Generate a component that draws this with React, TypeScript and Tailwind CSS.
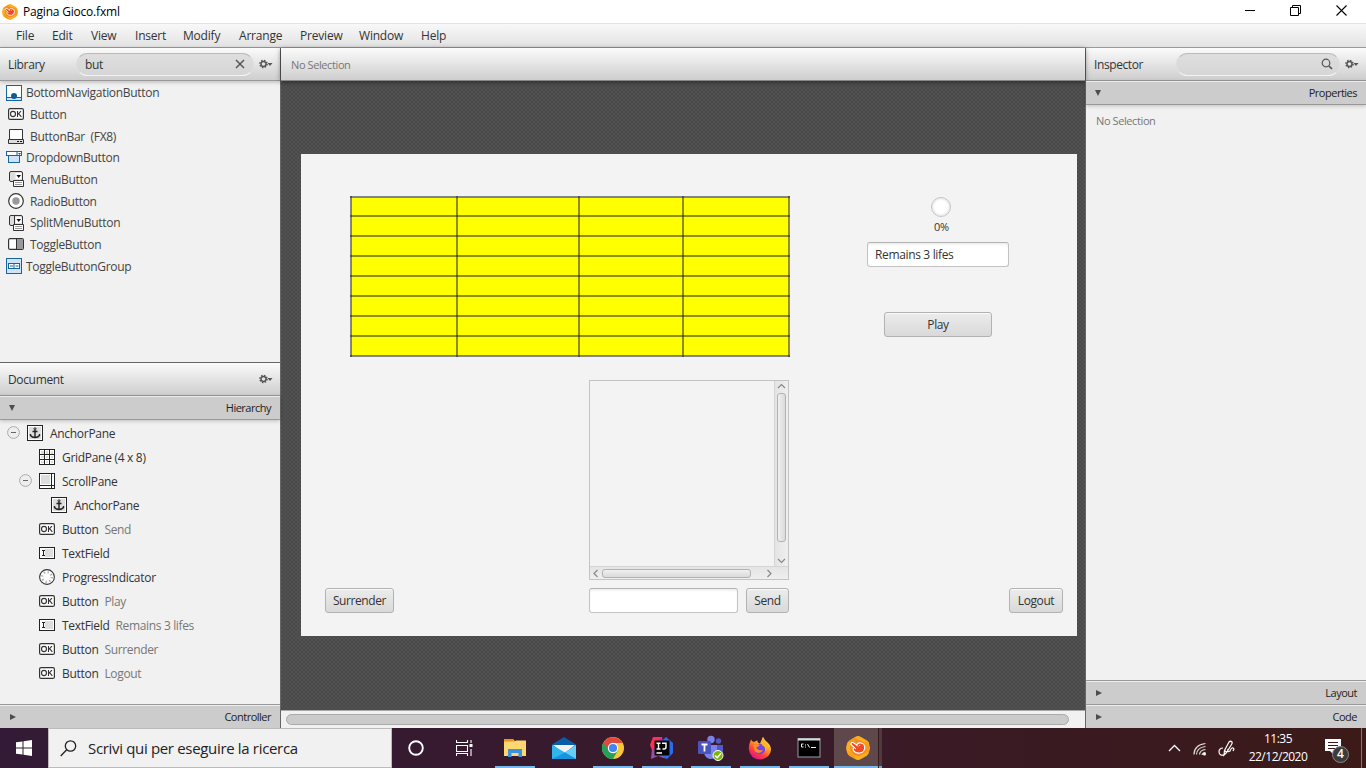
import React from "react";

const SEG = "font-['Open_Sans','Noto_Sans',sans-serif]";

function SceneLogo({ size }: { size: number }) {
  return (
    <svg width={size} height={size} viewBox="0 0 24 24" className="shrink-0">
      <path d="M9 1 Q12-1 15 1 L21 4.500 Q23.500 6 23.300 9 Q24.500 12 23.300 15 Q23 18.500 20.500 20 L15 23 Q12 25 9 23 L3.500 20 Q1 18 .7 15 Q-.5 12 .7 9 Q.8 6 3.300 4.500Z" fill="#fbb01f" />
      <path d="M3 5 L10 1 L12 6 L5 10Z M19 4 L23 9 L23 16 L18 18Z M2 15 L5 17 L10 23 L5 21Z" fill="#f58a12" opacity=".6" />
      <circle cx="12" cy="12" r="8" fill="#f68b2a" />
      <path d="M5 7.500 Q5.500 5.800 7.500 6.800 L10.500 9 Q12 6.500 15 7 Q19 8 18.800 12 Q18 16.500 14 17 Q9.500 17.500 7.500 14.500 Q6.500 12.800 8.500 11.800 L5.800 9.300 Q4.800 8.500 5 7.500Z" fill="#ee4a24" stroke="#fff" strokeWidth="1.200" />
      <path d="M10.500 9 L12 10.500 M13.200 8.800 L14.200 10 M8.500 11.800 L10 13" stroke="#fff" strokeWidth=".9" fill="none" />
    </svg>
  );
}

function Gear() {
  return (
    <svg width="14" height="10" viewBox="0 0 14 10" className="shrink-0">
      <circle cx="4.500" cy="5" r="3.500" fill="none" stroke="#555" strokeWidth="1.600" strokeDasharray="1.400 1.350" />
      <circle cx="4.500" cy="5" r="2.500" fill="none" stroke="#555" strokeWidth="1.400" />
      <path d="M8.500 4 H13.500 L11 7Z" fill="#555" />
    </svg>
  );
}

function OkIcon() {
  return (
    <svg width="16" height="16" viewBox="0 0 16 16">
      <rect x=".6" y="2.600" width="14.800" height="10.800" rx="1.500" fill="#fff" stroke="#333" strokeWidth="1.200" />
      <ellipse cx="5" cy="8" rx="2.500" ry="2.600" fill="none" stroke="#333" strokeWidth="1.100" />
      <path d="M9.500 5 V11 M13 5.200 L9.800 8.300 M10.600 7.600 L13.400 10.900" fill="none" stroke="#333" strokeWidth="1.100" />
    </svg>
  );
}

function AnchorIcon() {
  return (
    <svg width="16" height="16" viewBox="0 0 16 16">
      <rect x=".5" y=".5" width="15" height="15" fill="#fff" stroke="#222" />
      <rect x="2" y="2" width="12" height="12" fill="#ddd" />
      <circle cx="8" cy="3.800" r="1" fill="none" stroke="#222" />
      <path d="M8 5 V12 M5.500 6.500 H10.500 M3.500 9 V10.500 Q5 12.500 8 12.500 Q11 12.500 12.500 10.500 V9" fill="none" stroke="#222" strokeWidth="1.400" />
    </svg>
  );
}

function MenuIcon({ split }: { split?: boolean }) {
  return (
    <svg width="16" height="16" viewBox="0 0 16 16">
      <rect x="1.500" y=".5" width="13" height="10" rx="1.500" fill="#ddd" stroke="#333" />
      {split && <path d="M6.500 1 V10" stroke="#333" />}
      <rect x="7.500" y="2" width="6" height="6" fill="#fff" />
      <path d="M8.500 4 H13 L10.700 7Z" fill="#111" />
      <path d="M5.500 9.500 H15.500 V15.500 H5.500Z" fill="#fff" stroke="#333" />
      <path d="M7 11.500 H14 M7 13.500 H14" stroke="#999" />
    </svg>
  );
}

function ButtonBarIcon() {
  return (
    <svg width="16" height="16" viewBox="0 0 16 16">
      <path d="M1.500 11 V1.500 H14.500 V11" fill="#fff" stroke="#333" />
      <path d="M.5 11.500 H15.500 V15.500 H.5Z" fill="#ddd" stroke="#333" />
      <path d="M9 13.500 H11 M12 13.500 H14" stroke="#111" />
    </svg>
  );
}
function RadioIcon() {
  return (
    <svg width="16" height="16" viewBox="0 0 16 16">
      <circle cx="8" cy="8" r="7.300" fill="#fff" stroke="#333" strokeWidth="1.200" />
      <circle cx="8" cy="8" r="3.700" fill="#999" />
    </svg>
  );
}
function ToggleIcon() {
  return (
    <svg width="16" height="16" viewBox="0 0 16 16">
      <rect x=".6" y="2.600" width="14.800" height="10.800" rx="1.500" fill="#fff" stroke="#333" strokeWidth="1.200" />
      <path d="M8.500 3 H14 Q15 3 15 4 V12 Q15 13 14 13 H8.500Z" fill="#999" />
      <path d="M8.500 3 V13" stroke="#333" />
    </svg>
  );
}
function BottomNavIcon() {
  return (
    <svg width="16" height="16" viewBox="0 0 16 16">
      <rect x=".5" y=".5" width="15" height="15" fill="#fff" stroke="#15659f" />
      <path d="M1 12.500 H15 V15 H1Z" fill="#cfe2f7" />
      <path d="M1 12.500 H15" stroke="#15659f" />
      <circle cx="8" cy="11" r="3" fill="#0b5c97" />
    </svg>
  );
}
function DropdownIcon() {
  return (
    <svg width="16" height="16" viewBox="0 0 16 16">
      <rect x=".5" y="1.500" width="15" height="4" fill="#fff" stroke="#15659f" />
      <path d="M11 2 V5" stroke="#15659f" />
      <path d="M12 3 H15 L13.500 5Z" fill="#15659f" />
      <rect x="2.500" y="5.500" width="11" height="7" fill="#cfe2fb" stroke="#15659f" />
    </svg>
  );
}
function ToggleGroupIcon() {
  return (
    <svg width="16" height="16" viewBox="0 0 16 16">
      <rect x=".5" y=".5" width="15" height="15" fill="#cfe2fb" stroke="#15659f" />
      <rect x="2.500" y="5.500" width="11" height="5" fill="#fff" stroke="#15659f" />
      <path d="M8 5 V11 M4 8 H7 M9.500 8 H12.500" stroke="#15659f" />
    </svg>
  );
}
function GridIcon() {
  return (
    <svg width="16" height="16" viewBox="0 0 16 16">
      <rect x=".5" y=".5" width="15" height="15" fill="#fff" stroke="#222" />
      <path d="M2 2h3v3h-3z M7 2h2v3h-2z M12 2h2v3h-2z M2 7h3v2h-3z M7 7h2v2h-2z M12 7h2v2h-2z M2 12h3v2h-3z M7 12h2v2h-2z M12 12h2v2h-2z" fill="#ddd" />
      <path d="M5.500 0 V16 M10.500 0 V16 M0 5.500 H16 M0 10.500 H16" stroke="#222" />
    </svg>
  );
}
function ScrollIcon() {
  return (
    <svg width="16" height="16" viewBox="0 0 16 16">
      <rect x=".5" y=".5" width="15" height="15" fill="#fff" stroke="#222" />
      <rect x="2" y="2" width="9" height="9" fill="#ddd" />
      <path d="M12.500 0 V16 M0 12.500 H16" stroke="#222" />
    </svg>
  );
}
function FieldIcon() {
  return (
    <svg width="16" height="16" viewBox="0 0 16 16">
      <rect x=".5" y="2.500" width="15" height="11" fill="#fff" stroke="#222" />
      <rect x="6" y="4" width="8" height="8" fill="#ddd" />
      <path d="M3 5.500 H6 M3 10.500 H6 M4.500 5 V11" stroke="#222" />
    </svg>
  );
}
function ProgressIcon() {
  return (
    <svg width="16" height="16" viewBox="0 0 16 16">
      <circle cx="8" cy="8" r="7.400" fill="#fff" stroke="#333" strokeWidth="1.100" />
      <circle cx="8" cy="8" r="4.800" fill="none" stroke="#aaa" strokeWidth="2.200" strokeDasharray="1.300 2.470" />
    </svg>
  );
}

const library: { icon: React.ReactNode; name: string; wide?: boolean }[] = [
  { icon: <BottomNavIcon />, name: "BottomNavigationButton" },
  { icon: <OkIcon />, name: "Button", wide: true },
  { icon: <ButtonBarIcon />, name: "ButtonBar  (FX8)", wide: true },
  { icon: <DropdownIcon />, name: "DropdownButton" },
  { icon: <MenuIcon />, name: "MenuButton", wide: true },
  { icon: <RadioIcon />, name: "RadioButton", wide: true },
  { icon: <MenuIcon split />, name: "SplitMenuButton", wide: true },
  { icon: <ToggleIcon />, name: "ToggleButton", wide: true },
  { icon: <ToggleGroupIcon />, name: "ToggleButtonGroup" },
];

const tree: { icon: React.ReactNode; name: string; info?: string; pad: string; open?: boolean }[] = [
  { icon: <AnchorIcon />, name: "AnchorPane", pad: "pl-[7px]", open: true },
  { icon: <GridIcon />, name: "GridPane (4 x 8)", pad: "pl-[19px]" },
  { icon: <ScrollIcon />, name: "ScrollPane", pad: "pl-[19px]", open: true },
  { icon: <AnchorIcon />, name: "AnchorPane", pad: "pl-[31px]" },
  { icon: <OkIcon />, name: "Button", info: "Send", pad: "pl-[19px]" },
  { icon: <FieldIcon />, name: "TextField", pad: "pl-[19px]" },
  { icon: <ProgressIcon />, name: "ProgressIndicator", pad: "pl-[19px]" },
  { icon: <OkIcon />, name: "Button", info: "Play", pad: "pl-[19px]" },
  { icon: <FieldIcon />, name: "TextField", info: "Remains 3 lifes", pad: "pl-[19px]" },
  { icon: <OkIcon />, name: "Button", info: "Surrender", pad: "pl-[19px]" },
  { icon: <OkIcon />, name: "Button", info: "Logout", pad: "pl-[19px]" },
];

function Section({ title, open }: { title: string; open?: boolean }) {
  return (
    <div className={`z-10 flex shrink-0 items-center justify-between border-t border-t-[#ececec] bg-[#cccccc] ${open ? "h-6 border-b border-b-[#999] shadow-[0_1px_4px_rgba(0,0,0,0.22)]" : "h-[23px]"} pr-[9px] pl-[9px] text-[11px] tracking-[-0.5px] text-[#222]`}>
      <svg width="7" height="8" viewBox="0 0 7 8" className="mb-px">
        <path d={open ? "M0 1 H6 L3 7Z" : "M1 1 V7 L7 4Z"} fill="#4d4d4d" />
      </svg>
      <span>{title}</span>
    </div>
  );
}

function FxButton({ label, className }: { label: string; className: string }) {
  return (
    <div className={`absolute flex h-[25px] items-center justify-center rounded-[3px] border border-[#b2b2b2] bg-linear-to-b from-[#ececec] to-[#d9d9d9] pt-px tracking-[-0.4px] shadow-[inset_0_1px_0_#fafafa] ${className}`}>
      {label}
    </div>
  );
}

function Chevron({ d }: { d: string }) {
  return (
    <svg width="9" height="9" viewBox="0 0 9 9" className="shrink-0">
      <path d={d} fill="none" stroke="#888" strokeWidth="1.200" />
    </svg>
  );
}

function Explorer() {
  return (
    <svg width="24" height="24" viewBox="0 0 24 24">
      <path d="M1 3 H10 L12 5 H23 V20 H1Z" fill="#f3b72f" />
      <path d="M1 3 H10 V5 H1Z" fill="#e59b16" />
      <path d="M1 6 H11 L13 4.500 H23 V20 H1Z" fill="#fdd872" />
      <path d="M5 13 H19 V21 H15.500 V17 H8.500 V21 H5Z" fill="#3b93db" />
    </svg>
  );
}
function Mail() {
  return (
    <svg width="26" height="24" viewBox="0 0 26 24">
      <path d="M1 8.500 L13 1 L25 8.500 V12 H1Z" fill="#0a5da8" />
      <path d="M2 9 H24 L13 18Z" fill="#f2f2f2" />
      <path d="M1 9 L14 16.500 L25 9 V23 H1Z" fill="#30b5ef" />
      <path d="M14 16.500 L25 9 V23Z" fill="#65cdf8" />
      <path d="M1 23 L14 16.500 L25 23Z" fill="#1794df" />
    </svg>
  );
}
function Chrome() {
  return (
    <svg width="24" height="24" viewBox="0 0 24 24">
      <circle cx="12" cy="12" r="11" fill="#fbc638" />
      <path d="M12 12 L2.470 6.500 A11 11 0 0 0 12 23 L17 14Z" fill="#23a05a" />
      <path d="M2.470 6.500 A11 11 0 0 1 21.600 7 H12 L7.600 14.800Z" fill="#e04a3c" />
      <circle cx="12" cy="12" r="5.200" fill="#fff" />
      <circle cx="12" cy="12" r="4.100" fill="#4285f4" />
    </svg>
  );
}
function Idea() {
  return (
    <svg width="24" height="24" viewBox="0 0 24 24">
      <path d="M3 1 L12 1 L14 12 L2 14 L0 9Z" fill="#fb3158" />
      <path d="M10 2 L15 5 L14 9 L9 9Z" fill="#af2fb0" />
      <path d="M16 1 L23 7 V17 L17 23 L11 21 V6Z" fill="#2a6df0" />
      <path d="M2 13 L11 12 L14 22 L8 20 L1 23Z" fill="#9353a9" />
      <rect x="4.500" y="4.500" width="15" height="15" fill="#050505" />
      <path d="M6.500 7.300 H10.500 M6.500 13 H10.500 M8.500 7 V13 M12 7.300 H16 V11 Q16 13 14 13 H12.500 M6.500 17 H12" stroke="#fff" strokeWidth="1.400" fill="none" />
    </svg>
  );
}
function Teams() {
  return (
    <svg width="26" height="26" viewBox="0 0 26 26">
      <circle cx="20.500" cy="6" r="2.700" fill="#5059c9" />
      <path d="M17 10 H25 V17 Q24 20 20 20 H17Z" fill="#5059c9" />
      <circle cx="13" cy="4.500" r="3.700" fill="#7b83eb" />
      <path d="M6 10 H19 V18 Q18 24 12 24 Q7 23 6 18Z" fill="#7b83eb" />
      <rect x="0" y="6" width="13" height="13" rx="1" fill="#4b53bc" />
      <path d="M3.500 9.500 H9.500 M6.500 9.500 V16.500" stroke="#fff" strokeWidth="1.800" />
      <circle cx="20" cy="20.500" r="5" fill="#77b900" stroke="#fff" strokeWidth="1" />
      <path d="M17 20.500 L19.200 22.700 L23 18.300" stroke="#fff" strokeWidth="1.600" fill="none" />
    </svg>
  );
}
function Firefox() {
  return (
    <svg width="24" height="24" viewBox="0 0 24 24">
      <defs>
        <linearGradient id="ff" x1=".8" y1=".05" x2=".25" y2=".95">
          <stop offset="0" stopColor="#fff04a" />
          <stop offset=".4" stopColor="#ff9a20" />
          <stop offset=".7" stopColor="#ff3f40" />
          <stop offset="1" stopColor="#e31587" />
        </linearGradient>
      </defs>
      <path d="M3 3.500 Q4 5.500 6 6 Q8 4.500 9.500 4.500 Q9 7 12 7.500 L15 1 Q16 3.500 19 6 Q23 9 23 14 Q22 22.500 12 23.500 Q2 23 .8 13 Q.7 8 3 3.500Z" fill="url(#ff)" />
      <circle cx="12" cy="13" r="5.300" fill="#7547e6" />
      <path d="M5 9 Q9 7 12 9 Q10 11 8 11.500 Q10 15 15 14 Q12 19 7 15.500Z" fill="#ff8b24" />
      <path d="M14 9 Q18 11 17 15 Q20 13 19 8 L15 1 Q13 4 14 9Z" fill="#ffb52a" />
    </svg>
  );
}
function Cmd() {
  return (
    <svg width="24" height="24" viewBox="0 0 24 24">
      <rect x="1" y="2.500" width="22" height="18.500" fill="#000" stroke="#98a0a0" strokeWidth="1" />
      <path d="M1 3.500 H23" stroke="#d5dada" strokeWidth="2" />
      <path d="M6.500 8 H4.500 V11 H6.500 M8.500 8.500 V9.500 M8.500 10.500 V11.500 M10.500 8 L12.500 11.500 M14 11.500 H19" stroke="#eee" fill="none" />
    </svg>
  );
}

function Task({ children, running }: { children: React.ReactNode; running?: boolean }) {
  return (
    <div className="flex w-[49px] flex-col items-center">
      <div className="flex h-[38px] items-center justify-center pt-0.5">{children}</div>
      {running && <div className="h-0.5 w-10 bg-[#76b9ed]" />}
    </div>
  );
}

export default function App() {
  return (
    <div className={`flex h-[768px] w-[1366px] flex-col overflow-hidden bg-white text-[12px] leading-4 tracking-[-0.3px] text-[#333] ${SEG}`}>
      <header className="flex h-[23px] shrink-0 items-center bg-white pl-0.5 text-black">
        <SceneLogo size={16} />
        <span className="ml-[5px] flex-1 pt-px tracking-[-0.2px]">Pagina Gioco.fxml</span>
        <svg width="11" height="11" className="mr-[34px] mb-0.5"><path d="M0 5.500 H10" stroke="#000" /></svg>
        <svg width="11" height="11" className="mr-[35px] mb-0.5"><path d="M.5 2.500 H8.500 V10.500 H.5Z M2.500 2.500 V.5 H10.500 V8.500 H8.500" fill="none" stroke="#000" /></svg>
        <svg width="11" height="11" className="mr-[19px] mb-0.5"><path d="M.5 .5 L10.500 10.500 M10.500 .5 L.5 10.500" stroke="#000" strokeWidth="1.100" /></svg>
      </header>
      <nav className="flex h-[25px] shrink-0 items-center border-t border-b border-t-[#e3e3e3] border-b-[#999] bg-linear-to-b from-[#f8f8f8] to-[#e3e3e3] pt-px pl-4 tracking-[-0.2px]">
        <span className="w-9">File</span>
        <span className="w-[39px]">Edit</span>
        <span className="w-11">View</span>
        <span className="w-12">Insert</span>
        <span className="w-14">Modify</span>
        <span className="w-[61px]">Arrange</span>
        <span className="w-[59px]">Preview</span>
        <span className="w-[62px]">Window</span>
        <span>Help</span>
      </nav>
      <div className="flex min-h-0 flex-1">
        <aside className="flex w-[281px] shrink-0 flex-col border-r border-r-[#666] bg-[#f1f1f1]">
          <div className="z-10 flex h-[33px] shrink-0 items-center border-b border-b-[#999] bg-linear-to-b from-[#fbfbfb] to-[#cecece] pr-[7px] pl-2 shadow-[0_1px_4px_rgba(0,0,0,0.25)]">
            <span className="w-[68px] pt-0.5 tracking-[-0.35px]">Library</span>
            <div className="mr-[5px] flex h-[23px] flex-1 items-center justify-between rounded-full border border-t-[#bbb] border-r-[#ddd] border-b-[#f2f2f2] border-l-[#ddd] bg-linear-to-b from-[#dedede] to-[#d6d6d6] pr-2 pl-2">
              <span className="pt-0.5">but</span>
              <svg width="10" height="10"><path d="M1 1 L9 9 M9 1 L1 9" stroke="#555" strokeWidth="1.500" /></svg>
            </div>
            <Gear />
          </div>
          <div className="flex h-[281px] shrink-0 flex-col pt-px pl-1.5">
            {library.map((item) => (
              <div key={item.name} className={`flex h-[21.67px] shrink-0 items-center whitespace-pre text-[#444] ${item.wide ? "gap-1.5 pl-0.5" : "gap-1"}`}>
                {item.icon}
                <span className="pt-px">{item.name}</span>
              </div>
            ))}
          </div>
          <div className="flex h-[34px] shrink-0 items-center justify-between border-t border-b border-t-[#666] border-b-[#999] bg-linear-to-b from-[#fbfbfb] to-[#cecece] pr-[7px] pl-2">
            <span className="pt-0.5 tracking-[-0.35px]">Document</span>
            <Gear />
          </div>
          <Section title="Hierarchy" open />
          <div className="flex flex-1 flex-col border-b border-b-[#999] pt-[1px]">
            {tree.map((row, i) => (
              <div key={i} className={`flex h-6 shrink-0 items-center ${row.pad}`}>
                <span className="mr-[7px] mb-0.5 h-[13px] w-[13px]">
                  {row.open && (
                    <svg width="13" height="13"><circle cx="6.500" cy="6.500" r="5.900" fill="#eee" stroke="#aaa" /><path d="M4 6.500 H9" stroke="#666" /></svg>
                  )}
                </span>
                {row.icon}
                <span className="ml-[7px] pt-0.5 text-[#333]">{row.name}</span>
                {row.info && <span className="ml-[6px] pt-0.5 tracking-[-0.35px] text-[#777]">{row.info}</span>}
              </div>
            ))}
          </div>
          <Section title="Controller" />
        </aside>

        <main className="flex w-[804px] shrink-0 flex-col">
          <div className="z-10 flex h-[33px] shrink-0 items-center border-b border-b-[#888] bg-linear-to-b from-[#fbfbfb] to-[#cecece] pt-0.5 pl-2.5 text-[11px] tracking-[-0.4px] text-[#777] shadow-[0_1px_5px_rgba(0,0,0,0.5)]">No Selection</div>
          <div className="flex-1 bg-[#4d4d4d] bg-[repeating-conic-gradient(#494949_0_25%,#525252_0_50%)] bg-[length:4px_4px] pt-[73px] pl-5">
            <div className="relative h-[482px] w-[776px] bg-[#f3f3f3]">
              <div className="absolute top-[42px] left-[49px] h-[161px] w-[440px] p-px">
                <div className="h-full w-full bg-[#ffff00]" />
                <div className="absolute inset-0 flex flex-col border-b-2 border-[rgba(30,30,35,0.5)]">
                  {[19, 20, 20, 20, 20, 20, 20, 20].map((h, i) => (
                    <div key={i} className="shrink-0 border-t-2 border-[rgba(30,30,35,0.5)]" style={{ height: h }} />
                  ))}
                </div>
                <div className="absolute inset-0 flex border-r-2 border-[rgba(30,30,35,0.5)]">
                  {[106, 122, 104, 106].map((w, i) => (
                    <div key={i} className="shrink-0 border-l-2 border-[rgba(30,30,35,0.5)]" style={{ width: w }} />
                  ))}
                </div>
              </div>
              <div className="absolute top-[43px] left-[630px] h-5 w-5 rounded-full border border-[#c4c4c4] bg-white shadow-[inset_0_0_3px_rgba(0,0,0,0.2)]" />
              <span className="absolute top-[65px] left-[633px] text-[11px]">0%</span>
              <div className="absolute top-[88px] left-[566px] flex h-[25px] w-[142px] items-center rounded-[3px] border border-[#c3c3c3] border-t-[#b2b2b2] bg-white pt-px pl-[7px] tracking-[-0.35px] shadow-[inset_0_2px_2px_rgba(0,0,0,0.06)]">Remains 3 lifes</div>
              <FxButton label="Play" className="top-[158px] left-[583px] w-[108px]" />
              <div className="absolute top-[226px] left-[288px] flex h-[200px] w-[200px] flex-col border border-[#c3c3c3]">
                <div className="flex flex-1">
                  <div className="flex-1" />
                  <div className="flex w-[14px] flex-col items-center border-l border-l-[#d5d5d5] bg-linear-to-r from-[#e4e4e4] to-[#efefef] pt-px pr-px">
                    <Chevron d="M1 6 L4.500 2.500 L8 6" />
                    <div className="mt-0.5 h-[149px] w-[9px] rounded-[3px] border border-[#b2b2b2] bg-linear-to-r from-[#f0f0f0] to-[#dadada]" />
                    <span className="flex-1" />
                    <Chevron d="M1 2 L4.500 5.500 L8 2" />
                  </div>
                </div>
                <div className="flex h-[13px] items-center border-t border-t-[#d5d5d5] bg-linear-to-b from-[#e4e4e4] to-[#efefef] pl-px">
                  <Chevron d="M6.500 1 L3 4.500 L6.500 8" />
                  <div className="ml-0.5 h-[9px] w-[149px] rounded-[3px] border border-[#b2b2b2] bg-linear-to-b from-[#f0f0f0] to-[#dadada]" />
                  <span className="w-[15px]" />
                  <Chevron d="M1.500 1 L5 4.500 L1.500 8" />
                </div>
              </div>
              <div className="absolute top-[434px] left-[288px] h-[25px] w-[149px] rounded-[3px] border border-[#c3c3c3] border-t-[#b2b2b2] bg-white shadow-[inset_0_2px_2px_rgba(0,0,0,0.06)]" />
              <FxButton label="Send" className="top-[434px] left-[445px] w-[43px]" />
              <FxButton label="Surrender" className="top-[434px] left-6 w-[69px]" />
              <FxButton label="Logout" className="top-[434px] left-[708px] w-[54px]" />
            </div>
          </div>
          <div className="flex h-[18px] shrink-0 items-start border-t border-t-[#aaa] bg-[#f1f1f1] pt-[3px] pl-[5px]">
            <div className="h-[11px] w-[783px] rounded-full border border-[#aaa] bg-[#cbcbcb]" />
          </div>
        </main>

        <aside className="flex flex-1 flex-col border-l border-l-[#666] bg-[#f1f1f1]">
          <div className="flex h-[33px] shrink-0 items-center border-b border-b-[#999] bg-linear-to-b from-[#fbfbfb] to-[#cecece] pr-[7px] pl-2">
            <span className="w-[82px] pt-0.5 tracking-[-0.4px]">Inspector</span>
            <div className="mr-[5px] flex h-[23px] flex-1 items-center justify-end rounded-full border border-t-[#bbb] border-r-[#ddd] border-b-[#f2f2f2] border-l-[#ddd] bg-linear-to-b from-[#dedede] to-[#d6d6d6] pr-1.5">
              <svg width="12" height="12"><circle cx="5" cy="5" r="3.800" fill="none" stroke="#555" strokeWidth="1.200" /><path d="M7.800 7.800 L11 11" stroke="#555" strokeWidth="1.700" /></svg>
            </div>
            <Gear />
          </div>
          <Section title="Properties" open />
          <div className="flex-1 border-b border-b-[#999] pt-2 pl-2.5 text-[11px] tracking-[-0.4px] text-[#777]">No Selection</div>
          <Section title="Layout" />
          <div className="h-px shrink-0 bg-[#999]" />
          <Section title="Code" />
        </aside>
      </div>

      <footer className="flex h-10 shrink-0 bg-linear-to-r from-[#331a36] via-[#391a2c] to-[#3b1a18]">
        <div className="flex w-12 items-center justify-center">
          <svg width="16" height="16" viewBox="0 0 16 16"><path d="M0 2.300 L6.500 1.400 V7.500 H0Z M7.500 1.200 L16 0 V7.500 H7.500Z M0 8.500 H6.500 V14.600 L0 13.700Z M7.500 8.500 H16 V16 L7.500 14.800Z" fill="#fff" /></svg>
        </div>
        <div className="flex w-[344px] items-center border border-[#bbb] bg-[#f1f1f1] pl-[11px] text-[15px] text-[#222]">
          <svg width="17" height="17" viewBox="0 0 17 17"><circle cx="10.500" cy="6" r="5.200" fill="none" stroke="#222" strokeWidth="1.300" /><path d="M6.700 9.800 L.7 16" stroke="#222" strokeWidth="1.300" /></svg>
          <span className="ml-[11px] tracking-[-0.33px]">Scrivi qui per eseguire la ricerca</span>
        </div>
        <div className="flex w-12 items-center justify-center">
          <svg width="16" height="16"><circle cx="8" cy="8" r="6.800" fill="none" stroke="#fff" strokeWidth="1.900" /></svg>
        </div>
        <div className="flex w-[50px] items-center justify-center pr-0.5">
          <svg width="17" height="16"><path d="M.5 0 V2.500 H11.500 V0 M.5 5.500 H11.500 V11.500 H.5Z M.5 16 V13.500 H11.500 V16 M15 0 V3 M15 9 V16" fill="none" stroke="#fff" strokeWidth="1.100" /><rect x="13.500" y="4" width="3" height="3" fill="#fff" /></svg>
        </div>
        <Task running><Explorer /></Task>
        <Task><Mail /></Task>
        <Task running><Chrome /></Task>
        <Task running><Idea /></Task>
        <Task running><Teams /></Task>
        <Task running><Firefox /></Task>
        <Task running><Cmd /></Task>
        <div className="ml-px flex h-10 w-12">
          <div className="flex w-11 flex-col bg-[#5e484b]">
            <div className="flex flex-1 items-center justify-center pt-0.5 pl-1"><SceneLogo size={24} /></div>
            <div className="h-0.5 bg-[#76b9ed]" />
          </div>
          <div className="flex flex-1 flex-col justify-end border-l border-l-[#35191d] bg-[#533a3d]"><div className="h-0.5 bg-[#6ba6d5]" /></div>
        </div>
        <div className="flex flex-1 items-center justify-end text-[12px] text-white">
          <svg width="13" height="8" className="mr-3"><path d="M1 7 L6.500 1.500 L12 7" fill="none" stroke="#fff" strokeWidth="1.300" /></svg>
          <svg width="14" height="14" viewBox="0 0 14 14" className="mt-0.5 mr-[11px]"><path d="M1 12.500 Q1 3 12.500 1.500 M3.500 12.500 Q4 5.500 12.500 4.500 M6.500 12.500 Q7 8 12.500 7.500 M9 13 Q9.500 10.500 12.500 10.500" fill="none" stroke="#ddd" strokeWidth="1.200" /><circle cx="11.500" cy="12" r="1.500" fill="#fff" /></svg>
          <svg width="17" height="17" viewBox="0 0 17 17" className="mr-3"><path d="M6 15 L6.500 10.500 L11 2 Q12.500 .5 14 2 Q14.500 3 13.500 4.500 L8.500 12.500Z M6.500 10.500 L8.500 12 M5 8 Q1 8 1 12 Q1.500 16 6 15 M10 9 Q9 13 12 11 Q14 6 16 9 L15 11" fill="none" stroke="#fff" strokeWidth="1.200" /></svg>
          <div className="w-[62px] text-center leading-[18px] tracking-[-0.5px]">11:35<br />22/12/2020</div>
          <div className="relative mt-[3px] ml-4 h-[26px] w-6">
            <svg width="24" height="26"><path d="M0 2 H16 V14 H9 V18 L5 14 H0Z" fill="#fff" /><path d="M3 5.500 H13 M3 8.500 H13 M3 11.500 H10" stroke="#3b1a18" /><circle cx="15.500" cy="17.500" r="8" fill="#3c3c3c" stroke="#888" /></svg>
            <span className="absolute top-[9px] left-3 text-[12px] font-semibold">4</span>
          </div>
          <div className="ml-3 h-10 w-[5px] border-l border-l-[#8b7170]" />
        </div>
      </footer>
    </div>
  );
}
